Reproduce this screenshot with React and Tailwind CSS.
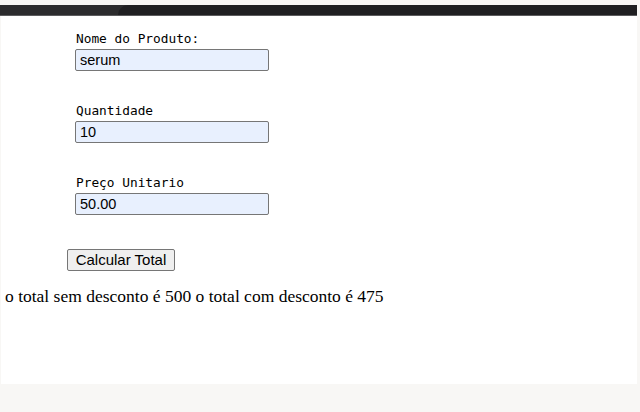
import React from 'react';

const mono = { fontFamily: '"DejaVu Sans Mono", monospace' };

const Field = ({ label, value }) => (
    <div className="flex flex-col">
        <label className="text-[12.8px] leading-[15px] pl-[1px] text-black" style={mono}>{label}</label>
        <input
            type="text"
            defaultValue={value}
            className="mt-[3px] w-[194px] h-[22px] px-[4px] bg-[#e8f0fe] border border-[#767676] rounded-[2px] text-[14.5px] text-black font-['Liberation_Sans',Arial,sans-serif]"
        />
    </div>
);

export default function App() {
    return (
        <div className="h-[412px] w-[640px] bg-[#f8f7f5] flex flex-col overflow-hidden">
            {/* browser chrome strip at the top */}
            <div className="h-[5px] shrink-0" />
            <div className="h-[11px] w-[637px] shrink-0 flex bg-[#2b2b2d] border-b border-[#5b5b5d]">
                <div className="w-[118px]" />
                <div className="flex-1 bg-[#1f1f21] rounded-tl-[10px]" />
            </div>

            <div className="w-[636px] ml-[1px] h-[368px] shrink-0 bg-white">
                <div className="pl-[74px] pt-[15px] flex flex-col gap-[32px]">
                    <Field label="Nome do Produto:" value="serum" />
                    <Field label="Quantidade" value="10" />
                    <Field label="Preço Unitario" value="50.00" />
                </div>
                <div className="pl-[66px] mt-[32px]">
                    <button className="h-[22px] w-[108px] bg-[#efefef] border border-[#767676] rounded-[2px] text-[15px] leading-[18px] text-black font-['Liberation_Sans',Arial,sans-serif]">
                        Calcular Total
                    </button>
                </div>
                <p className="mt-[15px] pl-[4px] text-[17.5px] leading-[20px] text-black font-['Liberation_Serif','Times_New_Roman',serif]">
                    o total sem desconto é 500 o total com desconto é 475
                </p>
            </div>
        </div>
    );
}
